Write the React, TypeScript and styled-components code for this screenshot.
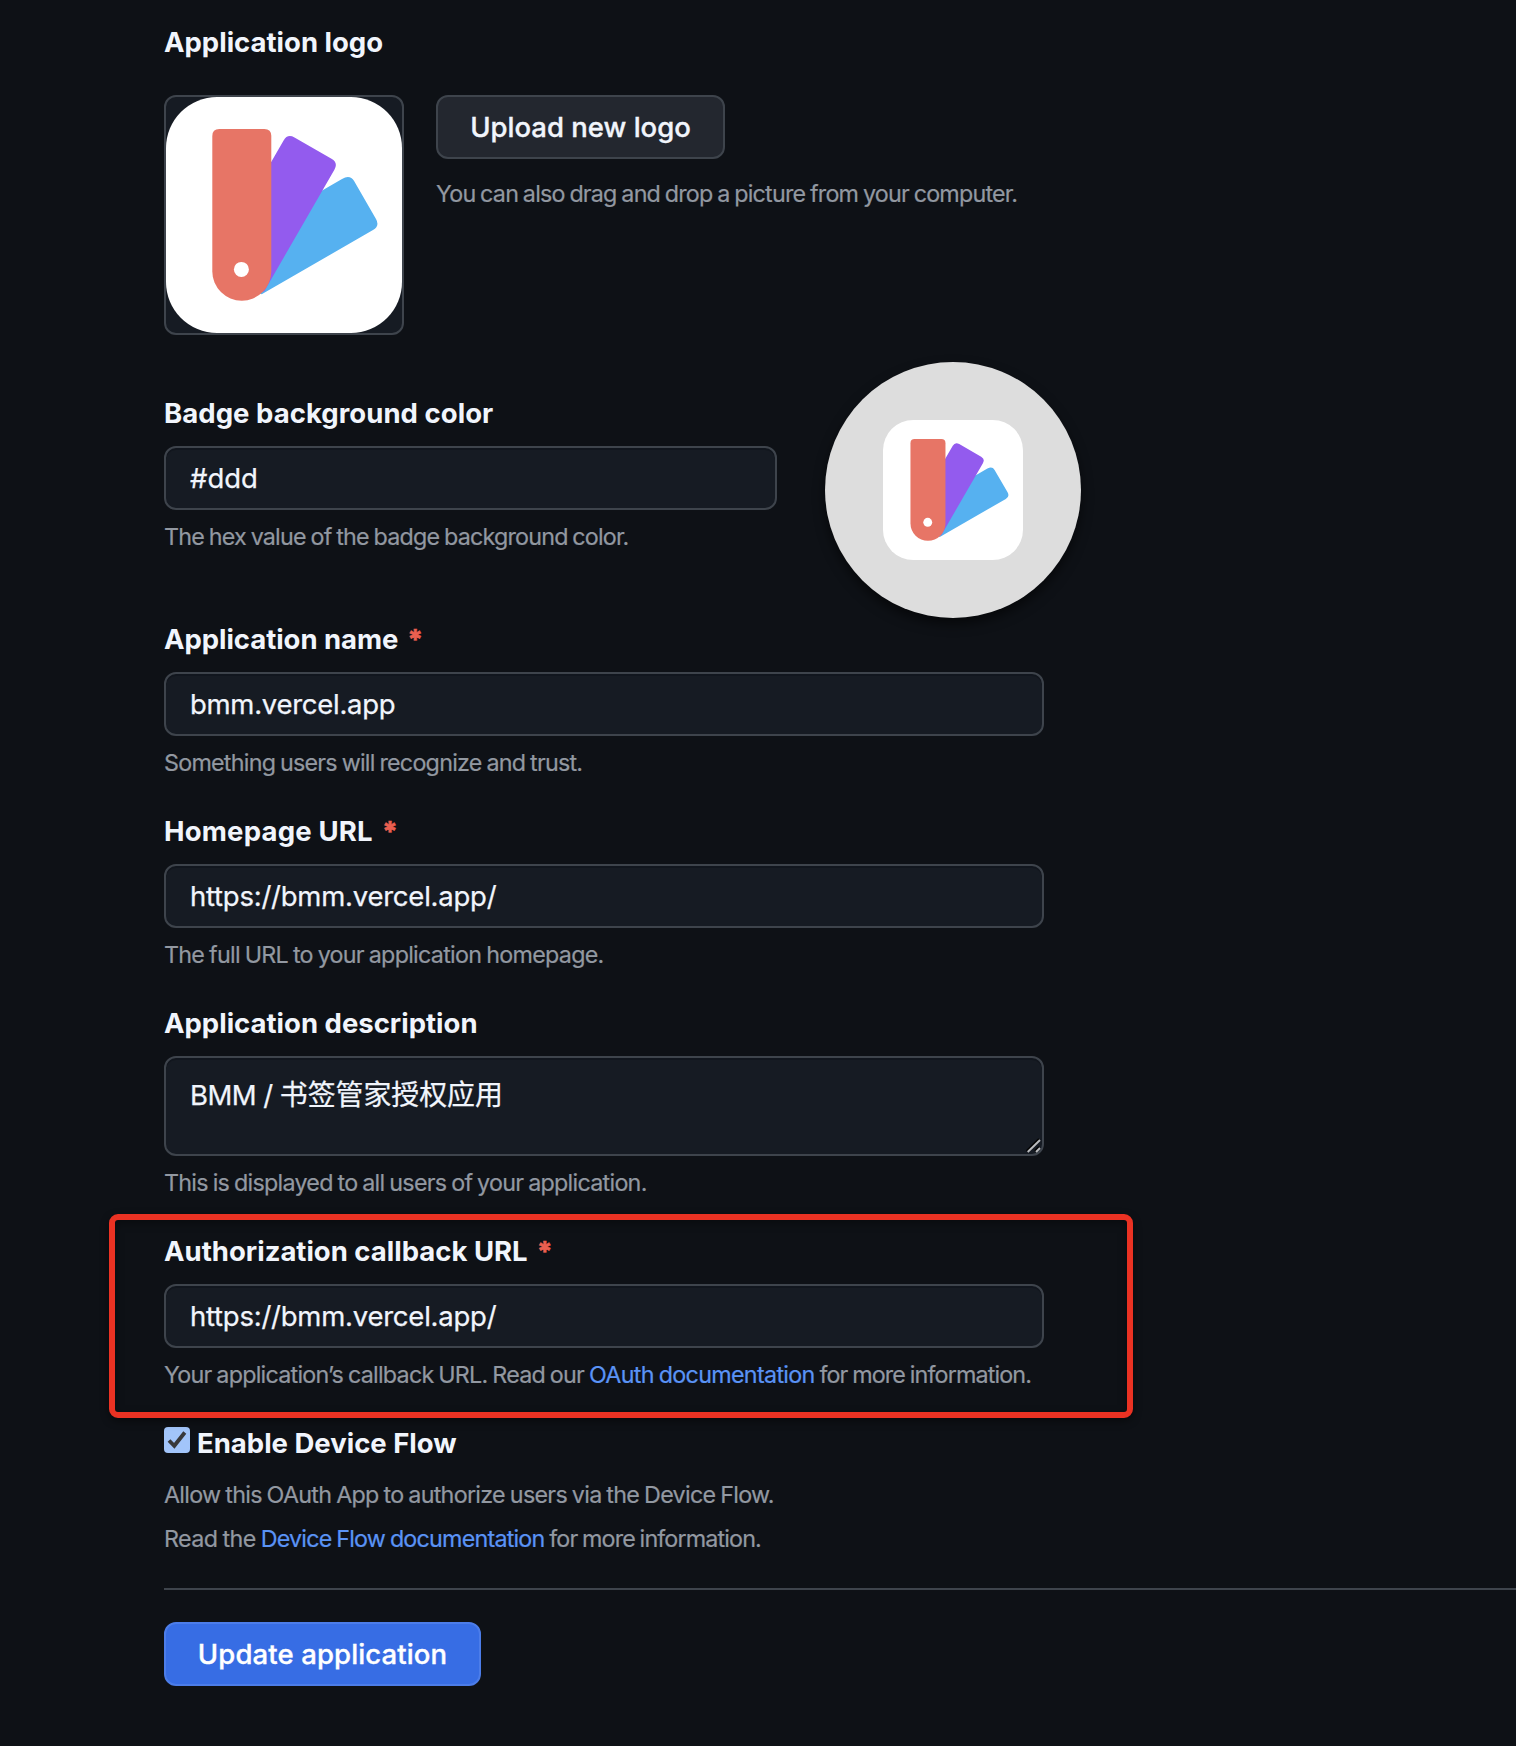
import React from 'react';
import styled, { createGlobalStyle } from 'styled-components';

const GlobalStyle = createGlobalStyle`
  *, *::before, *::after { box-sizing: border-box; }
  html, body { margin: 0; background: #0e1116; }
  body {
    font-family: Inter, "Noto Sans CJK SC", sans-serif;
    color: #f1f5fc;
    overflow: hidden;
  }
`;

const Page = styled.main`
  display: flex;
  flex-direction: column;
  align-items: flex-start;
  height: 1746px;
  padding: 21px 0 0 164px;
  background: #0e1116;
`;

const Label = styled.label<{ $track?: number }>`
  display: block;
  height: 42px;
  margin: 0;
  line-height: 42px;
  font-size: 27.5px;
  font-weight: 700;
  letter-spacing: ${(p) => p.$track ?? 0}px;
  white-space: nowrap;
`;

const Required = styled.span`
  margin-left: 9px;
  color: #ea5f50;
  font-weight: 800;
  -webkit-text-stroke: 0.5px #ea5f50;
`;

const Caption = styled.p<{ $track?: number }>`
  margin: 0;
  height: 36px;
  padding-top: 1px;
  line-height: 36px;
  font-size: 23.3px;
  color: #9298a1;
  letter-spacing: ${(p) => p.$track ?? 0}px;
  word-spacing: -1px;
  white-space: nowrap;
  -webkit-text-stroke: 0.2px currentColor;
`;

const Link = styled.a<{ $track?: number }>`
  color: #5a93f5;
  letter-spacing: ${(p) => p.$track ?? 0}px;
  text-decoration: none;
  -webkit-text-stroke: 0.2px #5a93f5;
`;

const Tail = styled.span`
  letter-spacing: -0.86px;
`;

const LogoRow = styled.section`
  display: flex;
  gap: 32px;
  margin-top: 32px;
`;

const LogoFrame = styled.div`
  width: 240px;
  height: 240px;
  border: 2px solid #3e444c;
  border-radius: 12px;
  background: #161b23;
  overflow: hidden;
`;

const UploadColumn = styled.div`
  display: flex;
  flex-direction: column;
  align-items: flex-start;
  gap: 16px;
`;

const Button = styled.button<{ $primary?: boolean; $width: number; $track?: number }>`
  width: ${(p) => p.$width}px;
  height: 64px;
  padding: 0;
  border: 2px solid ${(p) => (p.$primary ? '#4c7de9' : '#3e444c')};
  border-radius: 12px;
  background: ${(p) => (p.$primary ? '#376de4' : '#23272f')};
  color: ${(p) => (p.$primary ? '#ffffff' : '#f1f5fc')};
  font-family: inherit;
  font-size: 27.5px;
  font-weight: 500;
  letter-spacing: ${(p) => p.$track ?? 0}px;
  white-space: nowrap;
  -webkit-text-stroke: 0.35px currentColor;
`;

const BadgeRow = styled.section`
  display: flex;
  gap: 48px;
  margin-top: 27px;
`;

const BadgeField = styled.div`
  width: 613px;
  padding-top: 30px;
`;

const Badge = styled.div`
  display: flex;
  align-items: center;
  justify-content: center;
  width: 256px;
  height: 256px;
  border-radius: 50%;
  background: #dddddd;
  box-shadow: 0 6px 12px rgba(0, 0, 0, 0.55);
`;

const Field = styled.div<{ $first?: boolean }>`
  position: relative;
  width: 880px;
  margin-top: ${(p) => (p.$first ? 0 : 30)}px;
`;

const controlBox = `
  display: block;
  width: 100%;
  margin: 12px 0 8px;
  border: 2px solid #3e444c;
  border-radius: 12px;
  background: #161b23;
  color: #f1f5fc;
  box-shadow: inset 0 2px 0 rgba(1, 4, 9, 0.2);
  -webkit-text-stroke: 0.25px currentColor;
`;

const Input = styled.input<{ $track?: number }>`
  ${controlBox}
  height: 64px;
  padding: 0 24px;
  font-family: inherit;
  font-size: 27.5px;
  letter-spacing: ${(p) => p.$track ?? 0}px;
  outline: none;
`;

const TextArea = styled.div`
  ${controlBox}
  position: relative;
  height: 100px;
  padding: 14px 24px;
  line-height: 42px;
  font-size: 27.5px;
  letter-spacing: -0.55px;
`;

const Han = styled.span`
  font-family: "Noto Sans CJK SC", sans-serif;
  font-size: 27.9px;
  letter-spacing: 0;
`;

const ResizeGrip = styled.svg`
  position: absolute;
  right: 0;
  bottom: 0;
`;

const Highlight = styled.div`
  position: absolute;
  left: -55px;
  top: -16px;
  width: 1024px;
  height: 204px;
  border: 6px solid #eb3223;
  border-radius: 9px;
  box-shadow: 0 3px 8px rgba(0, 0, 0, 0.45), inset 0 3px 8px rgba(0, 0, 0, 0.35);
  pointer-events: none;
`;

const CheckRow = styled.div`
  display: flex;
  gap: 7px;
  margin-top: 30px;
`;

const CheckBox = styled.span`
  display: flex;
  width: 26px;
  height: 26px;
  margin-top: 5px;
  border-radius: 4px;
  background: #a2c5fa;
`;

const Notes = styled.div`
  display: flex;
  flex-direction: column;
  gap: 8px;
  margin-top: 12px;
`;

const Divider = styled.hr`
  align-self: stretch;
  height: 2px;
  margin: 32px 0;
  border: 0;
  background: #3e444c;
`;

const Artwork = styled.svg`
  display: block;
`;

function Swatches({ size }: { size: number }) {
  return (
    <Artwork width={size} height={size} viewBox="0 0 236 236">
      <rect width="236" height="236" rx="51" fill="#fff" />
      <path
        fill="#56b1f0"
        d="M100 126 L176 81.9 Q184.1 77.2 188.1 84.1 L210 122 Q214 129 207 133 L95.7 197.3 L80 190 Z"
      />
      <path
        fill="#935bee"
        d="M90 91.2 L117.6 43.4 Q121.6 36.5 128.5 40.5 L165.5 61.8 Q172.4 65.8 168.4 72.7 L98 194.7 L90 190 Z"
      />
      <path
        fill="#e77566"
        d="M53.3 32 H98.3 Q105.3 32 105.3 39 V174.2 A29.5 29.5 0 0 1 46.3 174.2 V39 Q46.3 32 53.3 32 Z"
      />
      <circle cx="75.4" cy="172.4" r="7.5" fill="#fff" />
    </Artwork>
  );
}

export default function App() {
  return (
    <>
      <GlobalStyle />
      <Page>
        <Label as="h2">Application logo</Label>
        <LogoRow>
          <LogoFrame>
            <Swatches size={236} />
          </LogoFrame>
          <UploadColumn>
            <Button $width={289}>Upload new logo</Button>
            <Caption $track={-0.8}>You can also drag and drop a picture from your computer.</Caption>
          </UploadColumn>
        </LogoRow>

        <BadgeRow>
          <BadgeField>
            <Label $track={0.05}>Badge background color</Label>
            <Input defaultValue="#ddd" />
            <Caption $track={-0.8}>The hex value of the badge background color.</Caption>
          </BadgeField>
          <Badge>
            <Swatches size={140} />
          </Badge>
        </BadgeRow>

        <Field $first>
          <Label $track={-0.05}>
            Application name<Required>*</Required>
          </Label>
          <Input defaultValue="bmm.vercel.app" $track={-0.28} />
          <Caption $track={-0.76}>Something users will recognize and trust.</Caption>
        </Field>

        <Field>
          <Label $track={0.2}>
            Homepage URL<Required>*</Required>
          </Label>
          <Input defaultValue="https://bmm.vercel.app/" $track={-0.24} />
          <Caption $track={-0.72}>The full URL to your application homepage.</Caption>
        </Field>

        <Field>
          <Label>Application description</Label>
          <TextArea>
            BMM / <Han>书签管家授权应用</Han>
            <ResizeGrip width="18" height="18" viewBox="0 0 18 18" fill="none">
              <path d="M2.7 15 L15 3" stroke="#000" strokeWidth="2" />
              <path d="M11 15 L15 11" stroke="#000" strokeWidth="2" />
              <path d="M3.7 16 L16 4" stroke="#b9bbbe" strokeWidth="2" />
              <path d="M12 16 L16 12" stroke="#b9bbbe" strokeWidth="2" />
            </ResizeGrip>
          </TextArea>
          <Caption $track={-0.73}>This is displayed to all users of your application.</Caption>
        </Field>

        <Field>
          <Label>
            Authorization callback URL<Required>*</Required>
          </Label>
          <Input defaultValue="https://bmm.vercel.app/" $track={-0.24} />
          <Caption $track={-0.755}>
            Your application’s callback URL. Read our <Link $track={-0.68}>OAuth documentation</Link>
            <Tail> for more information.</Tail>
          </Caption>
          <Highlight />
        </Field>

        <CheckRow>
          <CheckBox>
            <svg width="26" height="26" viewBox="0 0 26 26" fill="none">
              <path d="M5 13.5 L10.3 18.8 L20.8 5.5" stroke="#38393b" strokeWidth="3.8" />
            </svg>
          </CheckBox>
          <Label>Enable Device Flow</Label>
        </CheckRow>
        <Notes>
          <Caption $track={-0.71}>Allow this OAuth App to authorize users via the Device Flow.</Caption>
          <Caption $track={-0.58}>
            Read the <Link $track={-0.79}>Device Flow documentation</Link>
            <Tail> for more information.</Tail>
          </Caption>
        </Notes>
        <Divider />
        <Button $primary $width={317} $track={0.12}>Update application</Button>
      </Page>
    </>
  );
}
